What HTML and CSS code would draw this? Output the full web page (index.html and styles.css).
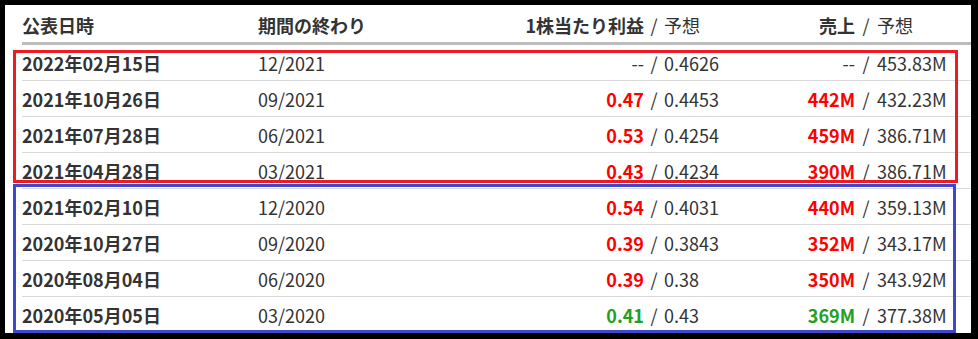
FILE: index.html
```html
<!DOCTYPE html>
<html lang="ja">
<head>
<meta charset="utf-8">
<title>決算</title>
<link rel="stylesheet" href="styles.css">
</head>
<body>
<div class="frame">
  <div class="table">
    <div class="row head">
      <div class="c-date b">公表日時</div>
      <div class="c-period b">期間の終わり</div>
      <div class="c-act b">1株当たり利益</div>
      <div class="c-sl">/</div>
      <div class="c-est">予想</div>
      <div class="c-act b">売上</div>
      <div class="c-sl">/</div>
      <div class="c-est">予想</div>
    </div>
    <div class="row">
      <div class="c-date b">2022年02月15日</div>
      <div class="c-period">12/2021</div>
      <div class="c-act">--</div>
      <div class="c-sl">/</div>
      <div class="c-est">0.4626</div>
      <div class="c-act">--</div>
      <div class="c-sl">/</div>
      <div class="c-est">453.83M</div>
    </div>
    <div class="row">
      <div class="c-date b">2021年10月26日</div>
      <div class="c-period">09/2021</div>
      <div class="c-act b red">0.47</div>
      <div class="c-sl">/</div>
      <div class="c-est">0.4453</div>
      <div class="c-act b red">442M</div>
      <div class="c-sl">/</div>
      <div class="c-est">432.23M</div>
    </div>
    <div class="row">
      <div class="c-date b">2021年07月28日</div>
      <div class="c-period">06/2021</div>
      <div class="c-act b red">0.53</div>
      <div class="c-sl">/</div>
      <div class="c-est">0.4254</div>
      <div class="c-act b red">459M</div>
      <div class="c-sl">/</div>
      <div class="c-est">386.71M</div>
    </div>
    <div class="row">
      <div class="c-date b">2021年04月28日</div>
      <div class="c-period">03/2021</div>
      <div class="c-act b red">0.43</div>
      <div class="c-sl">/</div>
      <div class="c-est">0.4234</div>
      <div class="c-act b red">390M</div>
      <div class="c-sl">/</div>
      <div class="c-est">386.71M</div>
    </div>
    <div class="row">
      <div class="c-date b">2021年02月10日</div>
      <div class="c-period">12/2020</div>
      <div class="c-act b red">0.54</div>
      <div class="c-sl">/</div>
      <div class="c-est">0.4031</div>
      <div class="c-act b red">440M</div>
      <div class="c-sl">/</div>
      <div class="c-est">359.13M</div>
    </div>
    <div class="row">
      <div class="c-date b">2020年10月27日</div>
      <div class="c-period">09/2020</div>
      <div class="c-act b red">0.39</div>
      <div class="c-sl">/</div>
      <div class="c-est">0.3843</div>
      <div class="c-act b red">352M</div>
      <div class="c-sl">/</div>
      <div class="c-est">343.17M</div>
    </div>
    <div class="row">
      <div class="c-date b">2020年08月04日</div>
      <div class="c-period">06/2020</div>
      <div class="c-act b red">0.39</div>
      <div class="c-sl">/</div>
      <div class="c-est">0.38</div>
      <div class="c-act b red">350M</div>
      <div class="c-sl">/</div>
      <div class="c-est">343.92M</div>
    </div>
    <div class="row last">
      <div class="c-date b">2020年05月05日</div>
      <div class="c-period">03/2020</div>
      <div class="c-act b green">0.41</div>
      <div class="c-sl">/</div>
      <div class="c-est">0.43</div>
      <div class="c-act b green">369M</div>
      <div class="c-sl">/</div>
      <div class="c-est">377.38M</div>
    </div>
  </div>
  <div class="mark mark-red"></div>
  <div class="mark mark-blue"></div>
</div>
</body>
</html>
```
FILE: styles.css
```css
* { box-sizing: border-box; }
html, body { margin: 0; padding: 0; background: #fff; }
body {
  font-family: "Noto Sans CJK JP", "Noto Sans", sans-serif;
  font-size: 18px;
  color: #333;
}
.frame {
  position: relative;
  width: 978px;
  height: 339px;
  border-style: solid;
  border-color: #000;
  border-width: 5px 7px 6px 5px;
  overflow: hidden;
}
.table {
  margin-left: 17px;
  width: 949px;
}
.row {
  display: grid;
  grid-template-columns: 236px 202px 184px 20px 96px 95px 22px 94px;
  align-items: center;
  height: 36px;
  border-bottom: 1px solid #d9d9d9;
  white-space: nowrap;
}
.row.head {
  height: 40px;
  padding-top: 3px;
  border-bottom: 3px solid #bdbdbd;
}
.row.last { border-bottom: none; }
.b { font-weight: bold; }
.c-act { text-align: right; }
.c-sl { text-align: center; }
.c-est { text-align: left; }
.red { color: #ff0000; }
.green { color: #22a022; }
.mark {
  position: absolute;
  border-style: solid;
  border-width: 3px;
  pointer-events: none;
}
.mark-red {
  border-color: #ed1c24;
  left: 8px;
  top: 45px;
  width: 945px;
  height: 133px;
}
.mark-blue {
  border-color: #3f48cc;
  left: 8px;
  top: 179px;
  width: 943px;
  height: 149px;
}
```
